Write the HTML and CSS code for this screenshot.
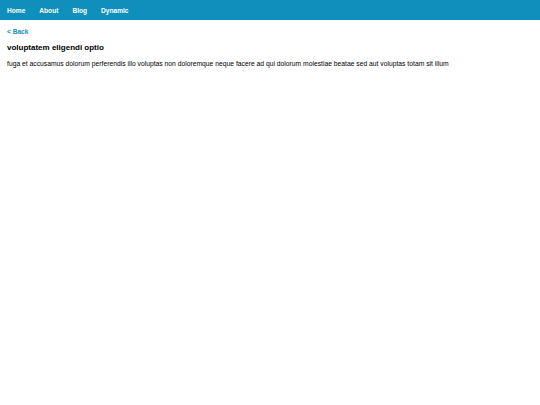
FILE: index.html
```html
<!DOCTYPE html>
<html>
<head>
<meta charset="utf-8">
<link rel="stylesheet" href="styles.css">
</head>
<body>
<nav class="nav">
  <a class="nav-link" href="#">Home</a>
  <a class="nav-link" href="#">About</a>
  <a class="nav-link" href="#">Blog</a>
  <a class="nav-link" href="#">Dynamic</a>
</nav>
<main class="content">
  <a class="back" href="#">&lt; Back</a>
  <h1 class="title">voluptatem eligendi optio</h1>
  <p class="body">fuga et accusamus dolorum perferendis illo voluptas non doloremque neque facere ad qui dolorum molestiae beatae sed aut voluptas totam sit illum</p>
</main>
</body>
</html>
```
FILE: styles.css
```css
html, body {
  margin: 0;
  padding: 0;
  background: #fff;
  font-family: "Liberation Sans", Arial, sans-serif;
}
.nav {
  display: flex;
  background: #0f8fbc;
  height: 20px;
  align-items: center;
}
.nav-link {
  color: #fff;
  font-weight: bold;
  font-size: 6.6px;
  line-height: 20px;
  padding: 1px 7px 0;
  text-decoration: none;
}
.content {
  padding: 8px 7px 7px;
}
.back {
  display: block;
  color: #0f8fbc;
  font-weight: bold;
  font-size: 6.6px;
  line-height: 8px;
  text-decoration: none;
}
.title {
  font-size: 8px;
  line-height: 10px;
  font-weight: bold;
  margin: 7px 0 0;
  color: #000;
}
.body {
  font-size: 6.75px;
  line-height: 8px;
  margin: 7px 0 0;
  color: #000;
}
```
